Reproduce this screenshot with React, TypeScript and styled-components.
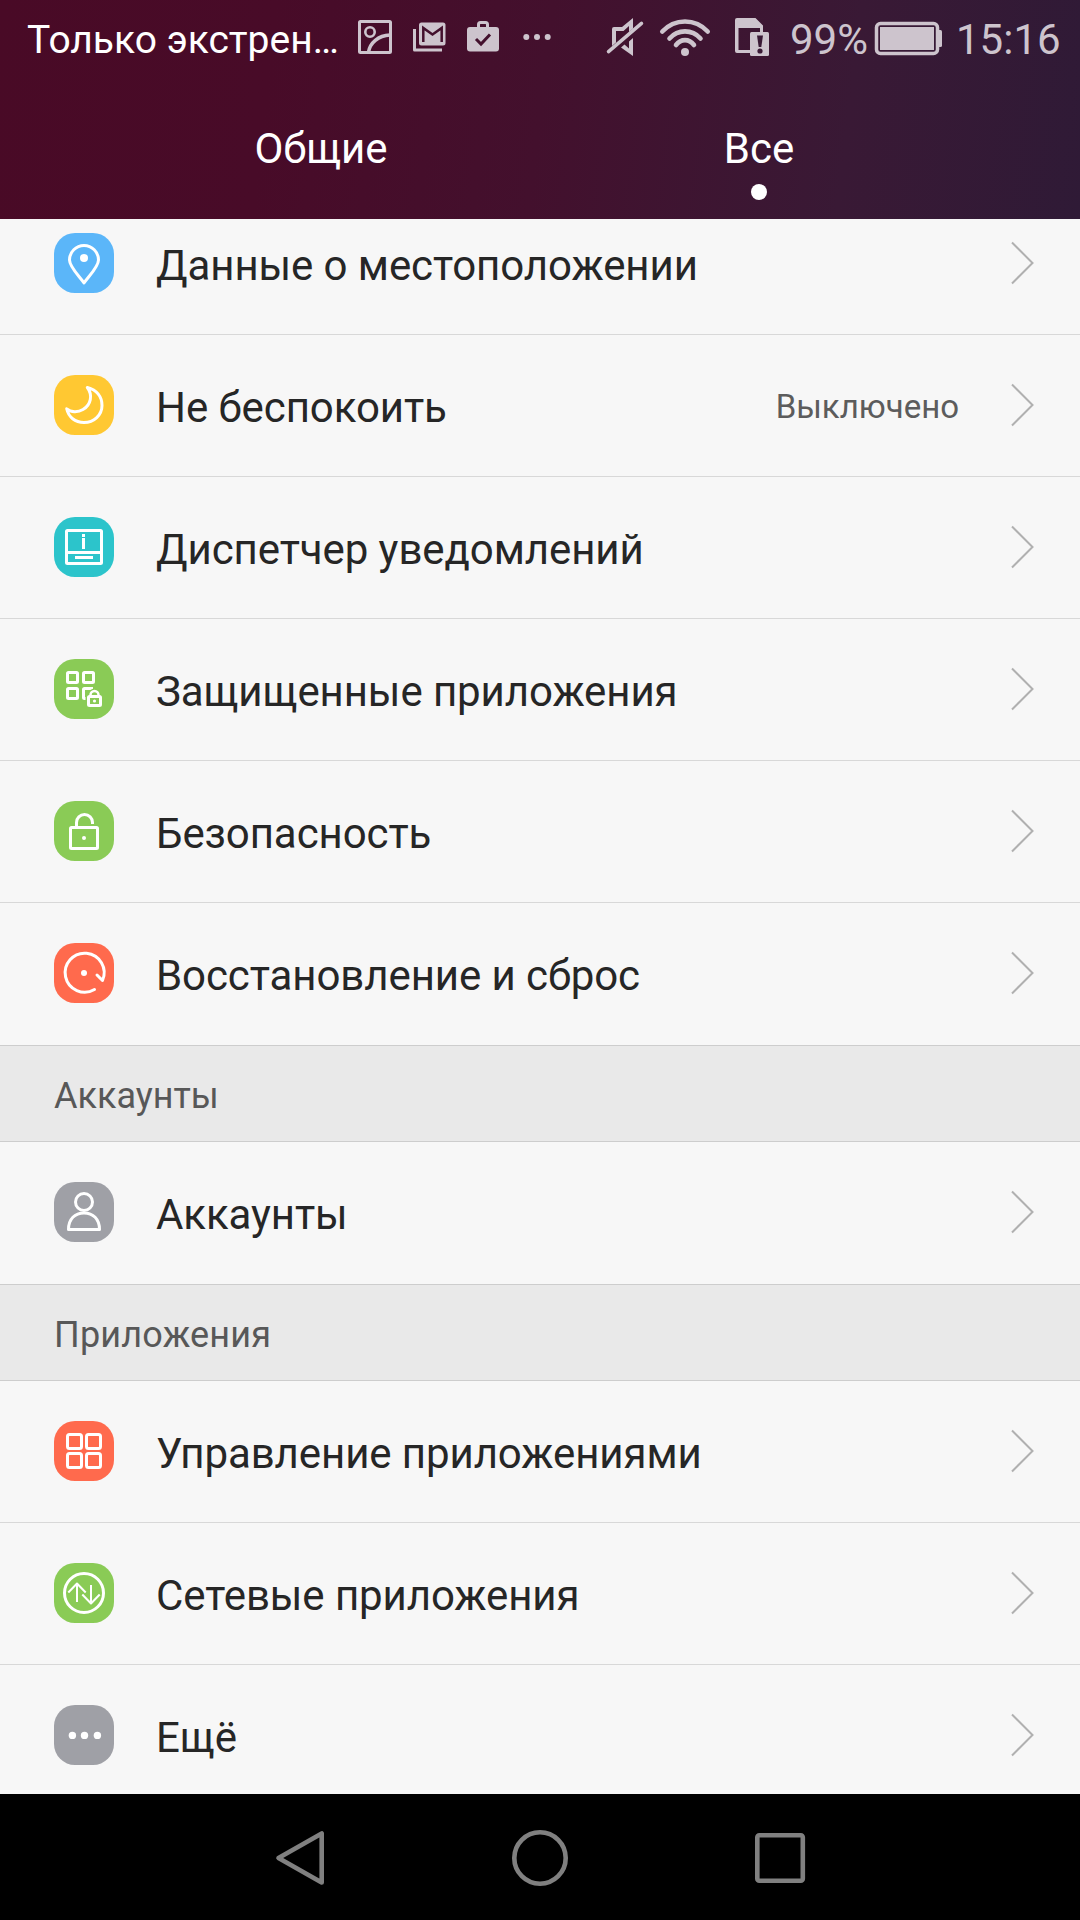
import React from "react";
import styled, { createGlobalStyle } from "styled-components";

const GlobalStyle = createGlobalStyle`
  * { box-sizing: border-box; }
  body { margin: 0; background: #000; }
`;

const Screen = styled.div`
  width: 1080px;
  height: 1920px;
  display: flex;
  flex-direction: column;
  overflow: hidden;
  font-family: Roboto, "Noto Sans", sans-serif;
  background: #f7f7f7;
`;

const Header = styled.header`
  flex: none;
  height: 219px;
  display: flex;
  flex-direction: column;
  background: linear-gradient(97deg, #490a26 0%, #480b28 25%, #43102d 50%, #391935 78%, #2f1a36 100%);
`;

const StatusBar = styled.div`
  height: 80px;
  display: flex;
  align-items: flex-start;
  padding-left: 27px;
  color: #cdc4cd;
`;

const StatusText = styled.span<{ $width: number; $size: number; $gap?: number; $color?: string }>`
  flex: none;
  width: ${(p) => p.$width}px;
  margin-left: ${(p) => p.$gap ?? 0}px;
  padding-top: 15px;
  font-size: ${(p) => p.$size}px;
  line-height: 50px;
  white-space: nowrap;
  color: ${(p) => p.$color ?? "inherit"};
`;

const Glyph = styled.svg<{ $gap?: number }>`
  flex: none;
  display: block;
  margin-left: ${(p) => p.$gap ?? 0}px;
  overflow: visible;
`;

const Tabs = styled.nav`
  flex: 1;
  display: flex;
  padding: 0 102px;
`;

const Tab = styled.div`
  flex: 1;
  display: flex;
  flex-direction: column;
  align-items: center;
  padding-top: 44px;
  color: #fff;
  font-size: 42px;
  line-height: 50px;
`;

const TabDot = styled.i`
  width: 16px;
  height: 16px;
  margin-top: 10px;
  border-radius: 50%;
  background: #fff;
`;

const Viewport = styled.main`
  flex: 1;
  min-height: 0;
  overflow: hidden;
`;

const List = styled.div`
  margin-top: -26px;
`;

const Row = styled.div<{ $last?: boolean }>`
  display: flex;
  align-items: center;
  height: ${(p) => (p.$last ? 143 : 142)}px;
  padding: 0 45px ${(p) => (p.$last ? 2 : 1)}px 54px;
  border-bottom: 1px solid ${(p) => (p.$last ? "#cdcdcd" : "#d8d8d8")};
`;

const Badge = styled.span<{ $color: string }>`
  flex: none;
  display: flex;
  width: 60px;
  height: 60px;
  border-radius: 21px;
  background: ${(p) => p.$color};
`;

const Label = styled.span`
  flex: 1;
  padding: 5px 0 0 42px;
  font-size: 42px;
  line-height: 50px;
  letter-spacing: -0.08px;
  color: #262626;
  white-space: nowrap;
`;

const Value = styled.span`
  padding-top: 3px;
  margin-right: 52px;
  font-size: 33px;
  line-height: 40px;
  color: #5c5c5c;
`;

const Section = styled.h2<{ $tracking?: number }>`
  display: flex;
  align-items: center;
  height: 96px;
  margin: 0;
  padding: 4px 54px 0;
  border-bottom: 1px solid #cdcdcd;
  background: #e9e9e9;
  font-size: 36px;
  font-weight: 400;
  letter-spacing: ${(p) => p.$tracking ?? 0}px;
  color: #585858;
`;

const NavBar = styled.footer`
  flex: none;
  height: 126px;
  display: flex;
  justify-content: center;
  align-items: flex-start;
  gap: 180px;
  padding-top: 32px;
  background: #000;
`;

const Chevron = () => (
  <Glyph width="24" height="44" viewBox="0 0 24 44" fill="none" stroke="#b0b0b0" strokeWidth="2">
    <path d="M1 1.500 21.500 22 1 42.500" />
  </Glyph>
);

const drawings = {
  pin: (
    <>
      <path d="M30 50C26 44 15.500 34 15.500 27a14.500 14.500 0 0 1 29 0C44.500 34 34 44 30 50Z" />
      <circle cx="30" cy="25" r="4" fill="#fff" stroke="none" />
    </>
  ),
  moon: <path d="M33.300 12.500C43 15 48 22 48 30.500 48 40 40 47.500 30 47.500 21 47.500 14.500 42 12.700 33.800 17 37.500 24 37.500 29 34.500 37 30 39 20 33.300 12.500Z" />,
  notice: (
    <>
      <rect x="12.500" y="13.500" width="35" height="33" rx="1" />
      <path d="M12 35.500H48M21 40.500H39M29.500 21V32M29.500 17V20" />
    </>
  ),
  lockedApps: (
    <>
      <rect x="13.500" y="13.500" width="10" height="10" rx="1" />
      <rect x="29.500" y="13.500" width="10" height="10" rx="1" />
      <rect x="13.500" y="29.500" width="10" height="10" rx="1" />
      <path d="M39 29.500H30.500a1 1 0 0 0-1 1V38.500a1 1 0 0 0 1 1H32" />
      <path d="M31.500 49.500V35h3c0-7 12-7 12 0h3v14.500Z" fill="#8acb56" stroke="none" />
      <rect x="34.500" y="37.500" width="12" height="9" rx="1" />
      <path d="M36.500 37V36a4 4 0 0 1 8 0V37" strokeWidth="2.500" />
      <circle cx="40.500" cy="42" r="1.600" fill="#fff" stroke="none" />
    </>
  ),
  unlock: (
    <>
      <rect x="16.500" y="26.500" width="27" height="21" rx="1" />
      <path d="M22.500 26V21.500a8 8 0 0 1 16 0V23" />
      <circle cx="30" cy="37" r="2" fill="#fff" stroke="none" />
    </>
  ),
  restore: (
    <>
      <path d="M40.500 46.500A19.500 19.500 0 1 1 48.500 37.500L43 32" strokeLinecap="round" />
      <circle cx="30" cy="30" r="3" fill="#fff" stroke="none" />
    </>
  ),
  person: (
    <>
      <circle cx="30" cy="20" r="8.500" />
      <path d="M14.500 47.500C14.500 37 21 31 30 31S45.500 37 45.500 47.500Z" />
    </>
  ),
  apps: (
    <>
      <rect x="13.500" y="13.500" width="14" height="14" rx="2" />
      <rect x="32.500" y="13.500" width="14" height="14" rx="2" />
      <rect x="13.500" y="32.500" width="14" height="14" rx="2" />
      <rect x="32.500" y="32.500" width="14" height="14" rx="2" />
    </>
  ),
  network: (
    <>
      <circle cx="30" cy="30" r="19.500" />
      <path d="M23 39V20M14.300 29.500 23 20.500 31.700 29.500M37 22V41M28.300 31.500 37 40.500 45.700 31.500" strokeWidth="2" />
    </>
  ),
  more: (
    <g fill="#fff" stroke="none">
      <circle cx="18.400" cy="30.400" r="3.700" />
      <circle cx="30.500" cy="30.400" r="3.700" />
      <circle cx="43.400" cy="30.400" r="3.700" />
    </g>
  ),
};

type Item = { icon: keyof typeof drawings; color: string; label: string; value?: string; last?: boolean };

const Setting = ({ icon, color, label, value, last }: Item) => (
  <Row $last={last}>
    <Badge $color={color}>
      <Glyph width="60" height="60" viewBox="0 0 60 60" fill="none" stroke="#fff" strokeWidth="3" strokeLinejoin="round">
        {drawings[icon]}
      </Glyph>
    </Badge>
    <Label>{label}</Label>
    {value && <Value>{value}</Value>}
    <Chevron />
  </Row>
);

const main: Item[] = [
  { icon: "pin", color: "#5bb6f9", label: "Данные о местоположении" },
  { icon: "moon", color: "#ffc832", label: "Не беспокоить", value: "Выключено" },
  { icon: "notice", color: "#2cc4cb", label: "Диспетчер уведомлений" },
  { icon: "lockedApps", color: "#8acb56", label: "Защищенные приложения" },
  { icon: "unlock", color: "#8acb56", label: "Безопасность" },
  { icon: "restore", color: "#ff6a4d", label: "Восстановление и сброс", last: true },
];

const apps: Item[] = [
  { icon: "apps", color: "#ff6a4d", label: "Управление приложениями" },
  { icon: "network", color: "#8acb56", label: "Сетевые приложения" },
  { icon: "more", color: "#9fa0a6", label: "Ещё" },
];

const ink = "#cdc4cd";

export default function App() {
  return (
    <Screen>
      <GlobalStyle />
      <Header>
        <StatusBar>
          <StatusText $width={331} $size={39} $color="#fff">Только экстрен…</StatusText>
          <Glyph width="34" height="76" viewBox="358 0 34 76" fill="none" stroke={ink} strokeWidth="3">
            <rect x="359.500" y="21.500" width="31" height="31" rx="1" />
            <circle cx="370" cy="32" r="4.700" strokeWidth="2.600" />
            <path d="M368.500 52C370 43 378 35.500 390 35" strokeWidth="3.500" />
          </Glyph>
          <Glyph $gap={21} width="33" height="76" viewBox="413 0 33 76">
            <path d="M414.500 29V50H442" fill="none" stroke={ink} strokeWidth="3" strokeLinejoin="round" />
            <rect x="419" y="22.500" width="26.500" height="23" rx="2.500" fill={ink} />
            <path d="M423.300 42V28L432.500 34.500 441.700 28V42" fill="none" stroke="#43102d" strokeWidth="2.500" />
          </Glyph>
          <Glyph $gap={21} width="32" height="76" viewBox="467 0 32 76" fill="none">
            <rect x="467" y="27" width="32" height="24.500" rx="3" fill={ink} />
            <path d="M478.500 28V24.500Q478.500 22.500 480.500 22.500H485.500Q487.500 22.500 487.500 24.500V28" stroke={ink} strokeWidth="3" />
            <path d="M476 39 481 44 490 34.500" stroke="#43102d" strokeWidth="3" />
          </Glyph>
          <Glyph $gap={24} width="28" height="76" viewBox="523 0 28 76" fill={ink}>
            <circle cx="526.300" cy="37" r="3" />
            <circle cx="537" cy="37" r="3" />
            <circle cx="547.700" cy="37" r="3" />
          </Glyph>
          <Glyph $gap={56} width="37" height="76" viewBox="607 0 37 76" fill="none" stroke={ink}>
            <path d="M612 46V29Q612 27 614 27H622L633 18V28.500L629 32V26L623.500 31H616V42.500ZM633 38V56L621 47.500 624.500 44.500 629 48.500V41.500Z" fill={ink} stroke="none" />
            <path d="M608.500 51.700 641.500 23.300" strokeWidth="3.500" strokeLinecap="round" />
          </Glyph>
          <Glyph $gap={16} width="50" height="76" viewBox="660 0 50 76" fill="none" stroke={ink} strokeWidth="4.600" strokeLinecap="round">
            <path d="M662.300 31.500C675 18.200 695 18.200 707.700 31.500M669.500 38.500C678 29 692 29 700.500 38.500M676 45C681 38.500 689 38.500 694 45" />
            <circle cx="685" cy="52" r="4" fill={ink} stroke="none" />
          </Glyph>
          <Glyph $gap={25} width="34" height="76" viewBox="735 0 34 76">
            <path fillRule="evenodd" d="M737 18H755.500L763 25.500V32H760V28H738.500V50H750V53H737Q735 53 735 51V20Q735 18 737 18Z" fill={ink} />
            <rect x="750" y="32" width="19" height="24" rx="1.500" fill={ink} />
            <path d="M757 35.500H763L761.300 47H758.700Z" fill="#391935" />
            <circle cx="760" cy="51" r="2.600" fill="#391935" />
          </Glyph>
          <StatusText $width={85} $size={42} $gap={21}>99%</StatusText>
          <Glyph width="68" height="76" viewBox="875 0 68 76">
            <rect x="876.500" y="23.500" width="61" height="30" rx="4" fill="none" stroke={ink} strokeWidth="3.500" />
            <rect x="880" y="27" width="54" height="23" fill={ink} />
            <path d="M939 30H940.500Q942 30 942 31.500V45.500Q942 47 940.500 47H939Z" fill={ink} />
          </Glyph>
          <StatusText $width={110} $size={42} $gap={13}>15:16</StatusText>
        </StatusBar>
        <Tabs>
          <Tab>Общие</Tab>
          <Tab>
            Все
            <TabDot />
          </Tab>
        </Tabs>
      </Header>
      <Viewport>
        <List>
          {main.map((item) => (
            <Setting key={item.label} {...item} />
          ))}
          <Section>Аккаунты</Section>
          <Setting icon="person" color="#9fa0a6" label="Аккаунты" last />
          <Section $tracking={0.2}>Приложения</Section>
          {apps.map((item) => (
            <Setting key={item.label} {...item} />
          ))}
        </List>
      </Viewport>
      <NavBar>
        <Glyph width="60" height="60" viewBox="0 0 60 60" fill="none" stroke="#808080" strokeWidth="4.600" strokeLinejoin="round">
          <path d="M8.500 32 51.700 7.500V56.500Z" />
        </Glyph>
        <Glyph width="60" height="60" viewBox="0 0 60 60" fill="none" stroke="#808080" strokeWidth="4.600">
          <circle cx="30" cy="32" r="25.700" />
        </Glyph>
        <Glyph width="60" height="60" viewBox="0 0 60 60" fill="none" stroke="#808080" strokeWidth="4.600">
          <rect x="7.300" y="9.300" width="45.500" height="45.500" rx="2" />
        </Glyph>
      </NavBar>
    </Screen>
  );
}
